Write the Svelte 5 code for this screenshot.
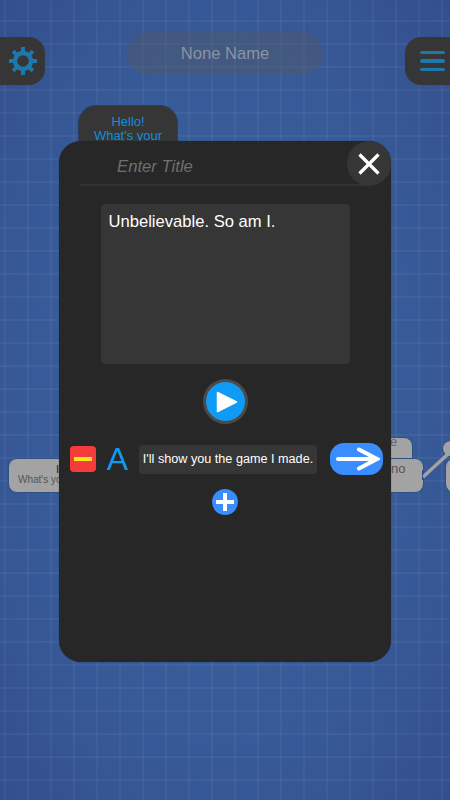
<script lang="ts">
	let title = '';
	const gridStep = 23;
</script>

<div class="canvas" style="--step: {gridStep}px">
	<!-- story nodes behind the dialog -->
	<div class="node node-top">Hello!<br />What's your</div>
	<div class="node node-grey node-left"><span class="node-name">I</span>What's you</div>
	<div class="node node-grey node-back">e</div>
	<div class="node node-grey node-mid">no</div>
	<div class="node node-grey node-far"></div>
	<div class="dot"></div>
	<svg class="link" viewBox="0 0 30 40" width="30" height="40">
		<path d="M2 36 L27 13" stroke="#a3a3a3" stroke-width="3.4" fill="none" />
		<path d="M1.5 29 V39" stroke="#2f5080" stroke-width="1" fill="none" />
	</svg>

	<button class="side side-left" type="button" aria-label="Settings">
		<svg viewBox="0 0 30 30" width="30" height="30">
			<circle cx="15" cy="15" r="8" fill="none" stroke="#1f78ab" stroke-width="4.4" />
			<path
				d="M15 1v5M15 24v5M1 15h5M24 15h5M5.1 5.1l3.5 3.5M21.4 21.4l3.5 3.5M5.1 24.9l3.5-3.5M21.4 8.6l3.5-3.5"
				stroke="#1f78ab"
				stroke-width="4"
			/>
		</svg>
	</button>
	<div class="name">None Name</div>
	<button class="side side-right" type="button" aria-label="Menu">
		<span></span><span></span><span></span>
	</button>

	<div class="dialog">
		<div class="title-row">
			<input class="title" type="text" placeholder="Enter Title" bind:value={title} />
		</div>
		<button class="close" type="button" aria-label="Close">
			<svg viewBox="0 0 24 24" width="24" height="24">
				<path d="M2.5 2.5 L21.5 21.5 M21.5 2.5 L2.5 21.5" stroke="#fff" stroke-width="3.2" fill="none" />
			</svg>
		</button>

		<div class="message">Unbelievable. So am I.</div>

		<button class="play" type="button" aria-label="Play">
			<svg viewBox="0 0 22 22" width="22" height="22">
				<path d="M1.5 1.5 L20.5 11 L1.5 20.5 Z" fill="#fff" stroke="#fff" stroke-width="1.5" stroke-linejoin="round" />
			</svg>
		</button>

		<div class="choice">
			<button class="remove" type="button" aria-label="Remove"><span></span></button>
			<span class="letter">A</span>
			<div class="choice-text">I'll show you the game I made.</div>
			<button class="next" type="button" aria-label="Next">
				<svg viewBox="0 0 46 26" width="46" height="26">
					<path d="M4 13 H43 M25 3.5 L43 13 L25 22.5" stroke="#fff" stroke-width="4" stroke-linecap="round" fill="none" />
				</svg>
			</button>
		</div>

		<button class="add" type="button" aria-label="Add">
			<svg viewBox="0 0 18 18" width="18" height="18">
				<path d="M9 0 V18 M0 9 H18" stroke="#fff" stroke-width="4" fill="none" />
			</svg>
		</button>
	</div>
</div>

<style>
	:global(body) {
		margin: 0;
	}

	.canvas {
		position: relative;
		width: 450px;
		height: 800px;
		overflow: hidden;
		font-family: 'Liberation Sans', Arial, sans-serif;
		background-color: #38598f;
		background-image:
			linear-gradient(rgba(255, 255, 255, 0.045) 2px, transparent 2px),
			linear-gradient(90deg, rgba(255, 255, 255, 0.045) 2px, transparent 2px),
			radial-gradient(ellipse at 50% 50%, #39659f 0%, #375a98 60%, #344f8d 100%);
		background-size:
			var(--step) var(--step),
			var(--step) var(--step),
			100% 100%;
		background-position:
			0 20px,
			4px 0,
			0 0;
	}

	button {
		border: none;
		padding: 0;
		display: flex;
		align-items: center;
		justify-content: center;
	}

	.side {
		position: absolute;
		top: 37px;
		width: 45px;
		height: 48px;
		background: #363636;
	}

	.side-left {
		left: 0;
		border-radius: 0 16px 16px 0;
	}

	.side-right {
		right: 0;
		border-radius: 16px 0 0 16px;
		flex-direction: column;
		gap: 5px;
		align-items: flex-start;
		padding-left: 15px;
	}

	.side-right span {
		width: 25px;
		height: 3.5px;
		border-radius: 2px;
		background: #1f78ab;
	}

	.name {
		position: absolute;
		left: 127px;
		top: 32px;
		width: 196px;
		height: 43px;
		border-radius: 21px;
		background: rgba(90, 90, 90, 0.36);
		color: #8a93a3;
		font-size: 16.6px;
		line-height: 43px;
		text-align: center;
	}

	.node {
		position: absolute;
		box-sizing: border-box;
		text-align: center;
	}

	.node-top {
		left: 78px;
		top: 105px;
		width: 100px;
		height: 60px;
		padding-top: 9px;
		border-radius: 18px;
		background: #363636;
		border: 1px solid #2c3e5c;
		color: #0f8fdc;
		font-size: 13px;
		line-height: 14px;
	}

	.node-grey {
		background: #a3a3a3;
		border-radius: 8px;
		box-shadow: 0 0 0 1px #2f5080;
		color: #555;
		font-size: 10px;
	}

	.node-left {
		left: 9px;
		top: 459px;
		width: 80px;
		height: 33px;
		padding: 15px 0 0 9px;
		text-align: left;
		line-height: 12px;
	}

	.node-name {
		position: absolute;
		left: 47px;
		top: 4px;
		color: #222;
		font-size: 11px;
	}

	.node-back {
		left: 370px;
		top: 438px;
		width: 42px;
		height: 30px;
		color: #666;
		text-align: left;
		line-height: 8px;
		padding: 0 0 0 20px;
		font-size: 13px;
	}

	.node-mid {
		left: 370px;
		top: 459px;
		width: 53px;
		height: 33px;
		text-align: left;
		padding: 3px 0 0 21px;
		line-height: 14px;
		font-size: 13px;
		color: #555;
	}

	.node-far {
		left: 446px;
		top: 459px;
		width: 30px;
		height: 33px;
	}

	.dot {
		position: absolute;
		left: 443px;
		top: 441px;
		width: 15px;
		height: 15px;
		border-radius: 50%;
		background: #a3a3a3;
		box-shadow: 0 0 0 1px #2f5080;
	}

	.link {
		position: absolute;
		left: 421px;
		top: 441px;
	}

	.dialog {
		position: absolute;
		left: 59px;
		top: 141px;
		box-sizing: border-box;
		width: 332px;
		height: 521px;
		border-radius: 22px;
		background: #272727;
		box-shadow: 0 0 1px #1c2a44;
		display: flex;
		flex-direction: column;
		align-items: center;
	}

	.title-row {
		align-self: flex-start;
		margin-left: 21px;
		width: 288px;
		height: 45px;
		box-sizing: border-box;
		border-bottom: 2px solid #333;
	}

	.title {
		box-sizing: border-box;
		width: 100%;
		height: 100%;
		padding: 9px 0 0 37px;
		border: none;
		outline: none;
		background: none;
		font-family: inherit;
		font-size: 16.7px;
		font-style: italic;
	}

	.title::placeholder {
		color: #6f6f6f;
		opacity: 1;
	}

	.close {
		position: absolute;
		right: 0;
		top: 0;
		width: 44px;
		height: 45px;
		border-radius: 22px;
		background: #363636;
	}

	.message {
		box-sizing: border-box;
		width: 249px;
		height: 160px;
		margin-top: 18px;
		padding: 8px 8px;
		border-radius: 4px;
		background: #363636;
		color: #fff;
		font-size: 16.6px;
		line-height: 20px;
	}

	.play {
		box-sizing: border-box;
		width: 45px;
		height: 45px;
		margin-top: 15px;
		border: 3px solid #4a4a4a;
		border-radius: 50%;
		background: #0f9bf5;
		padding-left: 3px;
	}

	.choice {
		box-sizing: border-box;
		align-self: stretch;
		margin-top: 19px;
		padding-left: 11px;
		display: flex;
		align-items: center;
	}

	.remove {
		width: 26px;
		height: 26px;
		border-radius: 4px;
		background: #f63b3b;
	}

	.remove span {
		width: 18px;
		height: 4px;
		background: #f8e71c;
	}

	.letter {
		width: 43px;
		text-align: center;
		color: #0f9bf5;
		font-size: 32px;
		line-height: 32px;
	}

	.choice-text {
		box-sizing: border-box;
		width: 178px;
		height: 29px;
		border-radius: 4px;
		background: #363636;
		color: #fff;
		font-size: 12.65px;
		line-height: 29px;
		text-align: center;
		white-space: nowrap;
	}

	.next {
		width: 53px;
		height: 32px;
		margin-left: 13px;
		border-radius: 14px;
		background: #3a8dff;
	}

	.add {
		width: 26px;
		height: 26px;
		margin-top: 14px;
		border-radius: 50%;
		background: #3a8dff;
	}
</style>
